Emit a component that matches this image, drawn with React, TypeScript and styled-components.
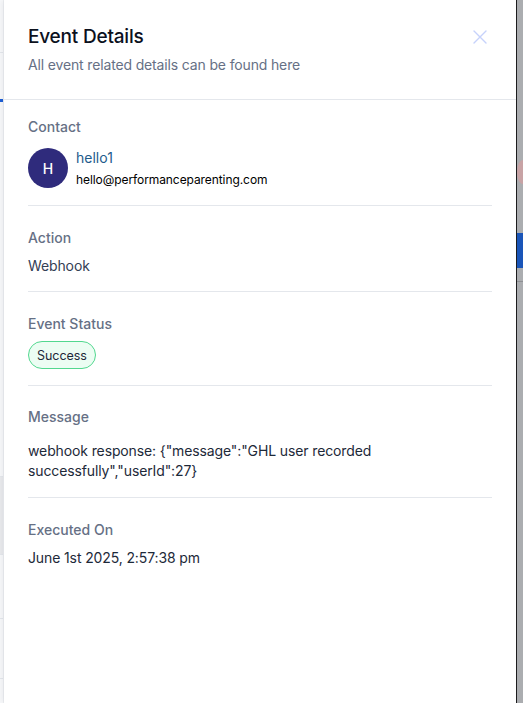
import React from "react";
import styled, { createGlobalStyle } from "styled-components";

const Global = createGlobalStyle`
  html, body { margin: 0; padding: 0; background: #ffffff; }
  body { font-family: Inter, "Noto Sans", sans-serif; -webkit-font-smoothing: antialiased; }
  * { box-sizing: border-box; }
`;

const Screen = styled.div`
  display: flex;
  width: 523px;
  height: 703px;
  overflow: hidden;
`;

const LeftStrip = styled.div`
  width: 4px;
  flex: none;
  display: flex;
  flex-direction: column;
  background: #f7f8fa;
  border-right: 1px solid #eceef1;
`;

const StripPiece = styled.div<{ $h: number; $bg?: string; $line?: string }>`
  height: ${(p) => p.$h}px;
  flex: none;
  background: ${(p) => p.$bg || "transparent"};
  border-bottom: ${(p) => (p.$line ? `1px solid ${p.$line}` : "none")};
`;

const Drawer = styled.aside`
  width: 512px;
  flex: none;
  display: flex;
  flex-direction: column;
  background: #ffffff;
  box-shadow: -2px 0 6px rgba(16, 24, 40, 0.06);
`;

const Header = styled.header`
  display: flex;
  justify-content: space-between;
  align-items: flex-start;
  padding: 23px 24px 24px 24px;
  border-bottom: 1px solid #e4e7ec;
`;

const TitleBlock = styled.div`
  display: flex;
  flex-direction: column;
  gap: 4px;
`;

const Title = styled.h2`
  margin: 0;
  font-size: 19px;
  line-height: 28px;
  font-weight: 500;
  letter-spacing: -0.2px;
  color: #0c111d;
`;

const Subtitle = styled.p`
  margin: 0;
  font-size: 14px;
  line-height: 20px;
  letter-spacing: -0.15px;
  color: #667085;
`;

const CloseButton = styled.button`
  border: 0;
  background: transparent;
  padding: 0;
  margin: 7px 5px 0 0;
  width: 14px;
  height: 14px;
  display: flex;
  cursor: pointer;
`;

const Body = styled.div`
  display: flex;
  flex-direction: column;
  padding: 0 24px;
`;

const Section = styled.section<{ $top: number; $gap: number; $bottom?: number }>`
  display: flex;
  flex-direction: column;
  gap: ${(p) => p.$gap}px;
  padding: ${(p) => p.$top}px 0 ${(p) => p.$bottom ?? 16}px;
  border-bottom: 1px solid #e4e7ec;
  &:last-child { border-bottom: 0; }
`;

const Label = styled.div`
  font-size: 14px;
  line-height: 20px;
  font-weight: 500;
  color: #667085;
`;

const Value = styled.div<{ $dark?: boolean }>`
  font-size: 14px;
  line-height: 20px;
  letter-spacing: -0.12px;
  color: ${(p) => (p.$dark ? "#1d2939" : "#344054")};
`;

const ContactRow = styled.div`
  display: flex;
  align-items: center;
  gap: 8px;
`;

const Avatar = styled.div`
  width: 40px;
  height: 40px;
  flex: none;
  border-radius: 50%;
  background: #2f2b7c;
  color: #ffffff;
  display: flex;
  align-items: center;
  justify-content: center;
  font-size: 14px;
  font-weight: 500;
`;

const ContactInfo = styled.div`
  display: flex;
  flex-direction: column;
  gap: 3px;
  height: 40px;
`;

const ContactName = styled.a`
  font-size: 14px;
  line-height: 20px;
  color: #1e5b8c;
  text-decoration: none;
`;

const ContactEmail = styled.div`
  font-size: 12px;
  line-height: 18px;
  letter-spacing: -0.08px;
  color: #000000;
`;

const Pill = styled.span`
  align-self: flex-start;
  display: inline-flex;
  align-items: center;
  height: 28px;
  padding: 0 8px;
  border: 1px solid #52d88f;
  border-radius: 14px;
  background: #ecfdf3;
  color: #1d2939;
  font-size: 12.5px;
  letter-spacing: -0.05px;
  font-weight: 400;
`;

const RightStrip = styled.div`
  flex: 1;
  display: flex;
  flex-direction: column;
  background: #abadb0;
  border-left: 1px solid #1c1c1e;
`;

const Dot = styled.div`
  width: 12px;
  height: 24px;
  border-radius: 50%;
  background: #c8a3a5;
  flex: none;
`;

export default function App() {
  return (
    <>
      <Global />
      <Screen>
        <LeftStrip>
          <StripPiece $h={53} $line="#e4e7ec" />
          <StripPiece $h={46} />
          <StripPiece $h={3} $bg="#1d5fd6" />
          <StripPiece $h={225} />
          <StripPiece $h={150} $line="#e4e7ec" />
          <StripPiece $h={78} $bg="#e9eaed" $line="#e4e7ec" />
          <StripPiece $h={64} $line="#e4e7ec" />
          <StripPiece $h={60} $line="#e4e7ec" />
        </LeftStrip>
        <Drawer>
          <Header>
            <TitleBlock>
              <Title>Event Details</Title>
              <Subtitle>All event related details can be found here</Subtitle>
            </TitleBlock>
            <CloseButton aria-label="Close">
              <svg width="14" height="14" viewBox="0 0 14 14">
                <path d="M1 1L13 13M13 1L1 13" stroke="#c6d2fb" strokeWidth="1.4" strokeLinecap="round" />
              </svg>
            </CloseButton>
          </Header>
          <Body>
            <Section $top={17} $gap={11} $bottom={17}>
              <Label>Contact</Label>
              <ContactRow>
                <Avatar>H</Avatar>
                <ContactInfo>
                  <ContactName href="#">hello1</ContactName>
                  <ContactEmail>hello@performanceparenting.com</ContactEmail>
                </ContactInfo>
              </ContactRow>
            </Section>
            <Section $top={22} $gap={8} $bottom={15}>
              <Label>Action</Label>
              <Value>Webhook</Value>
            </Section>
            <Section $top={22} $gap={7} $bottom={16}>
              <Label>Event Status</Label>
              <Pill>Success</Pill>
            </Section>
            <Section $top={21} $gap={14}>
              <Label>Message</Label>
              <Value $dark>
                webhook response: {"{"}"message":"GHL user recorded successfully","userId":27{"}"}
              </Value>
            </Section>
            <Section $top={22} $gap={8}>
              <Label>Executed On</Label>
              <Value $dark>June 1st 2025, 2:57:38 pm</Value>
            </Section>
          </Body>
        </Drawer>
        <RightStrip>
          <StripPiece $h={160} />
          <Dot />
          <StripPiece $h={49} />
          <StripPiece $h={35} $bg="#1a55b8" />
          <StripPiece $h={14} $line="#8e9094" />
        </RightStrip>
      </Screen>
    </>
  );
}
